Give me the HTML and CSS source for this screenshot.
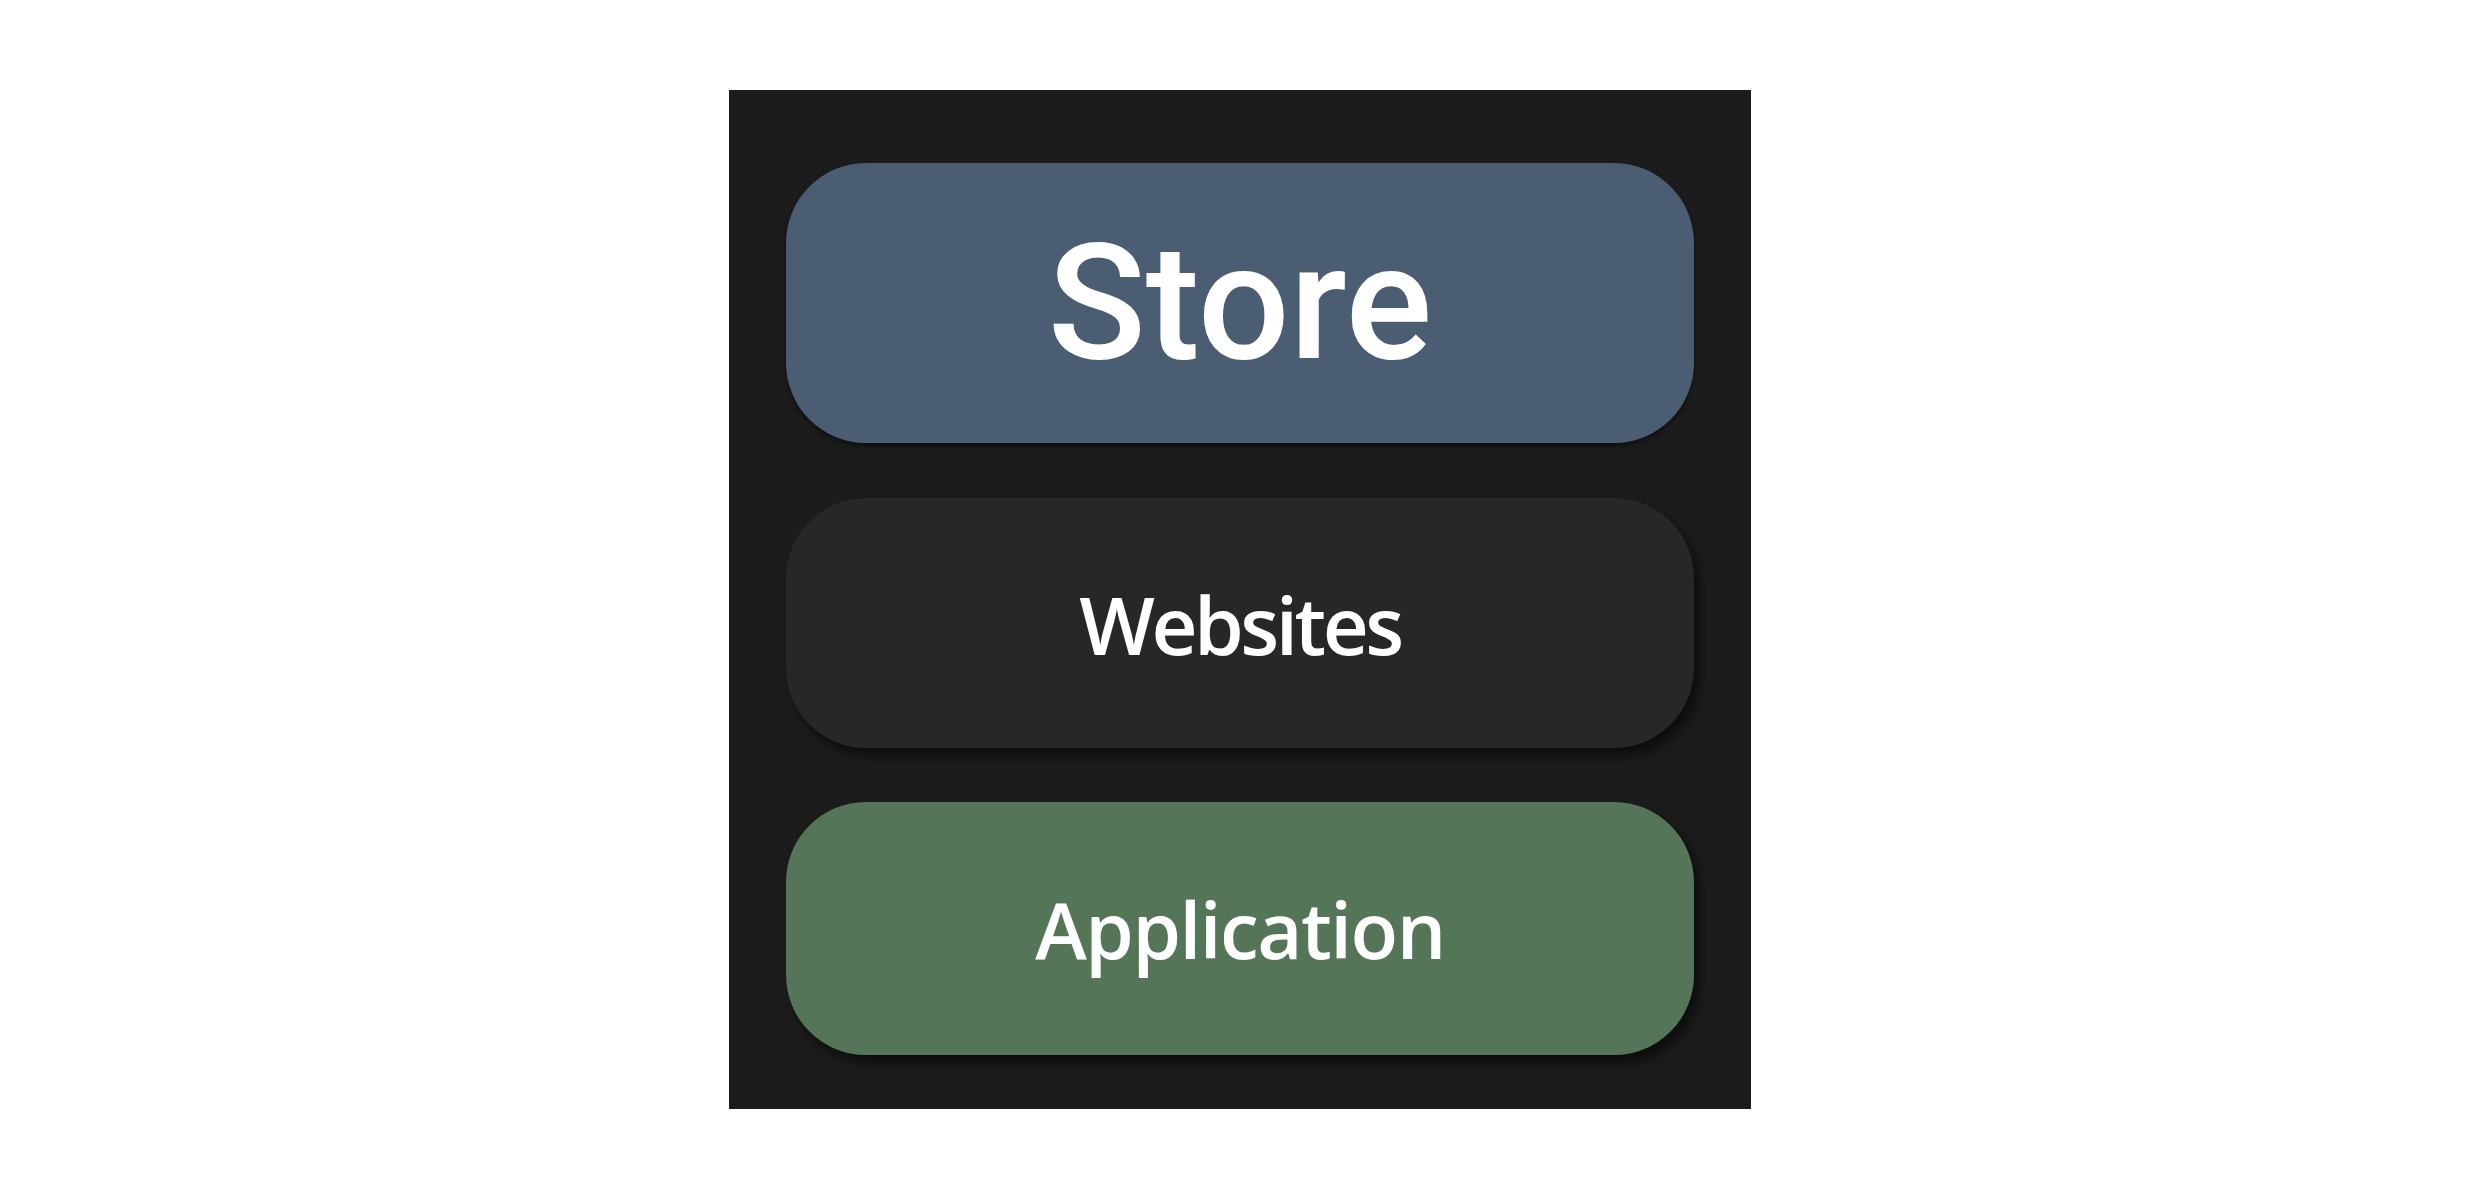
FILE: index.html
```html
<!DOCTYPE html>
<html lang="en">
<head>
  <meta charset="UTF-8" />
  <title>Menu</title>
  <link rel="stylesheet" href="styles.css">
</head>
<body>

  <div class="menu">
    <button class="menu-btn store">Store</button>
    <button class="menu-btn websites">Websites</button>
    <button class="menu-btn application">Application</button>
  </div>

</body>
</html>
```

FILE: styles.css
```css
* {
  box-sizing: border-box;
  margin: 0;
  padding: 0;
}

body {
  background-color: #ffffff;
  font-family: 'Open Sans', sans-serif;
}

.menu {
  width: 1022px;
  height: 1019px;
  margin: 90px auto 0;
  padding: 73px 57px 54px;
  background-color: #1c1c1c;
  display: flex;
  flex-direction: column;
  gap: 55px;
}

.menu-btn {
  width: 100%;
  border: none;
  border-radius: 80px;
  color: #ffffff;
  font-family: 'Open Sans', sans-serif;
  font-weight: 600;
  display: flex;
  align-items: center;
  justify-content: center;
  cursor: pointer;
  box-shadow: 6px 8px 12px rgba(0, 0, 0, 0.55);
}

.store {
  height: 280px;
  background-color: #4b5d72;
  font-family: 'Roboto', sans-serif;
  font-weight: 500;
  font-size: 162px;
  box-shadow: 0 3px 4px rgba(0, 0, 0, 0.5);
}

.websites {
  height: 250px;
  background-color: #262728;
  font-size: 80px;
  letter-spacing: -3.5px;
}

.application {
  height: 253px;
  margin-top: -1px;
  background-color: #557558;
  font-size: 78px;
  letter-spacing: -1.5px;
}
```
